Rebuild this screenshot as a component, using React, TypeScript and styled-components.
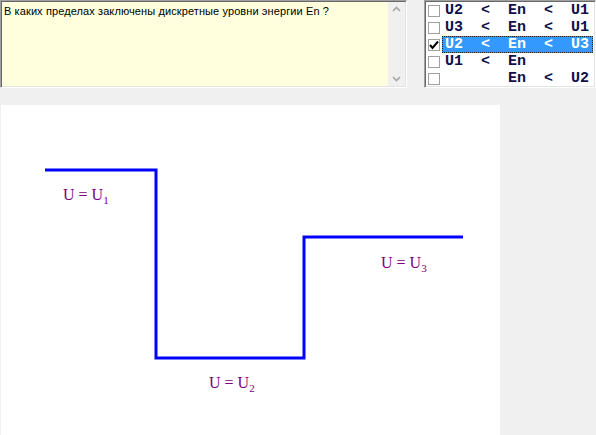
import React from 'react';
import styled, { createGlobalStyle } from 'styled-components';

const GlobalStyle = createGlobalStyle`
  html, body {
    margin: 0;
    padding: 0;
    background: #f0f0f0;
  }
`;

const Page = styled.div`
  width: 596px;
  height: 435px;
  display: flex;
  flex-direction: column;
  overflow: hidden;
`;

const TopRow = styled.div`
  display: flex;
  align-items: flex-start;
  height: 88px;
`;

const Memo = styled.div`
  box-sizing: border-box;
  width: 407px;
  height: 88px;
  display: flex;
  border: 1px solid;
  border-color: #a0a0a0 #ffffff #ffffff #a0a0a0;
  box-shadow: inset 1px 1px 0 #696969, inset -1px -1px 0 #e3e3e3;
  background: #ffffdd;
  padding: 2px;
`;

const MemoText = styled.div`
  flex: 1;
  padding: 1px 0 0 1px;
  font-family: 'Liberation Sans', Arial, sans-serif;
  font-size: 11px;
  letter-spacing: 0.1px;
  line-height: 14px;
  color: #000;
`;

const ScrollBar = styled.div`
  width: 17px;
  margin: -1px -1px -1px 0;
  background: #f0f0f0;
  display: flex;
  flex-direction: column;
  justify-content: space-between;
  align-items: center;
  padding: 4px 0;
`;

const ListBox = styled.div`
  box-sizing: border-box;
  margin-left: 17px;
  width: 172px;
  height: 88px;
  border: 1px solid;
  border-color: #a0a0a0 #ffffff #ffffff #a0a0a0;
  box-shadow: inset 1px 1px 0 #696969, inset -1px -1px 0 #e3e3e3;
  background: #ffffff;
  padding: 1px 2px 0 2px;
`;

const Row = styled.div`
  display: flex;
  align-items: center;
  height: 17px;
`;

const Check = styled.div`
  box-sizing: border-box;
  width: 12px;
  height: 12px;
  margin-left: 1px;
  border: 1px solid #a0a0a0;
  background: #fff;
  display: flex;
  align-items: center;
  justify-content: center;
`;

const Item = styled.div<{ $selected?: boolean }>`
  box-sizing: border-box;
  flex: 1;
  height: 17px;
  margin-left: 2px;
  padding-left: 2px;
  font-family: 'Liberation Mono', 'Courier New', monospace;
  font-weight: bold;
  font-size: 15px;
  line-height: 15px;
  white-space: pre;
  color: ${p => (p.$selected ? '#ffffff' : '#10104a')};
  background: ${p => (p.$selected ? '#3399ff' : 'transparent')};
  border: 1px ${p => (p.$selected ? 'dotted #202020' : 'solid transparent')};
`;

const Canvas = styled.div`
  margin: 17px 0 0 1px;
  width: 499px;
  height: 330px;
  background: #ffffff;
`;

const Chevron: React.FC<{ up?: boolean }> = ({ up }) => (
  <svg width="9" height="6" viewBox="0 0 9 6">
    <path
      d={up ? 'M1 5 L4.5 1.5 L8 5' : 'M1 1 L4.5 4.5 L8 1'}
      fill="none"
      stroke="#a6a6a6"
      strokeWidth="1.6"
    />
  </svg>
);

const Tick = () => (
  <svg width="10" height="10" viewBox="0 0 10 10">
    <path d="M1 5 L3.5 8 L9 1.5" fill="none" stroke="#000" strokeWidth="2" />
  </svg>
);

const items = [
  { text: 'U2  <  En  <  U1', checked: false },
  { text: 'U3  <  En  <  U1', checked: false },
  { text: 'U2  <  En  <  U3', checked: true },
  { text: 'U1  <  En', checked: false },
  { text: '       En  <  U2', checked: false },
];

const Label: React.FC<{ x: number; y: number; sub: string }> = ({ x, y, sub }) => (
  <text x={x} y={y} fill="#800080" fontFamily="'Liberation Serif', 'Times New Roman', serif" fontSize="16">
    U = U
    <tspan fontSize="11" dy="4">{sub}</tspan>
  </text>
);

const App: React.FC = () => {
  return (
    <Page>
      <GlobalStyle />
      <TopRow>
        <Memo>
          <MemoText>В каких пределах заключены дискретные уровни энергии En ?</MemoText>
          <ScrollBar>
            <Chevron up />
            <Chevron />
          </ScrollBar>
        </Memo>
        <ListBox>
          {items.map((it, i) => (
            <Row key={i}>
              <Check>{it.checked && <Tick />}</Check>
              <Item $selected={it.checked}>{it.text}</Item>
            </Row>
          ))}
        </ListBox>
      </TopRow>
      <Canvas>
        <svg width="499" height="330" viewBox="0 0 499 330">
          <polyline
            points="44,65 155,65 155,253 303,253 303,132 462,132"
            fill="none"
            stroke="#0000ff"
            strokeWidth="3"
            strokeLinejoin="miter"
          />
          <Label x={62} y={95} sub="1" />
          <Label x={208} y={283} sub="2" />
          <Label x={380} y={163} sub="3" />
        </svg>
      </Canvas>
    </Page>
  );
};

export default App;
